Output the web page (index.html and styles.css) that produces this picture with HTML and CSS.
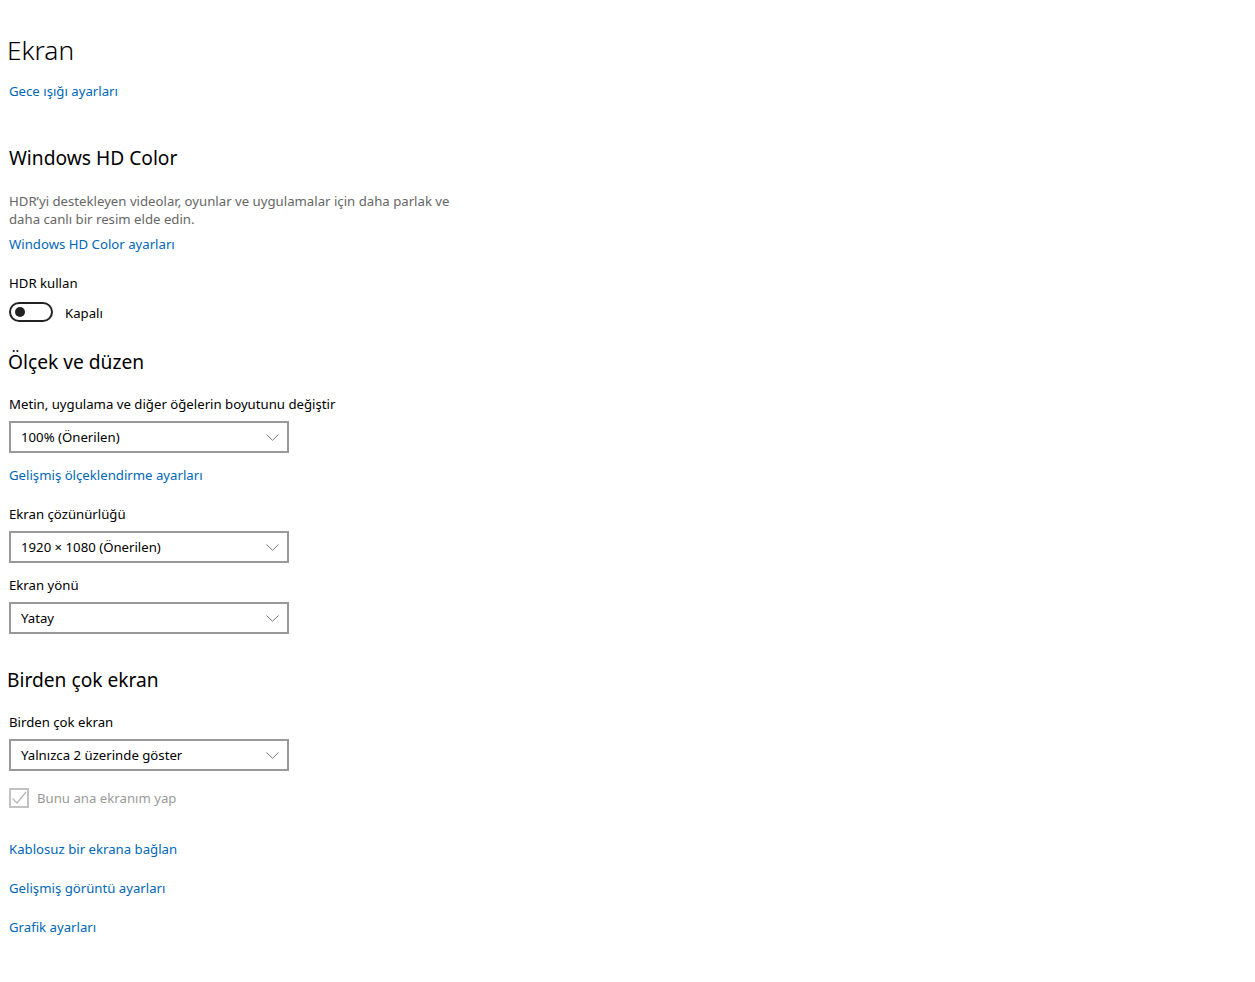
FILE: index.html
```html
<!DOCTYPE html>
<html lang="tr">
  <head>
    <meta charset="UTF-8" />
    <title>Ekran</title>
    <link rel="stylesheet" href="styles.css">
  </head>
  <body>
    <div class="page">
      <h1 class="page-title">Ekran</h1>
      <a class="link link-night" href="#">Gece ışığı ayarları</a>

      <h2 class="section-title hd-title">Windows HD Color</h2>
      <p class="desc">HDR’yi destekleyen videolar, oyunlar ve uygulamalar için daha parlak ve<br>daha canlı bir resim elde edin.</p>
      <a class="link hd-link" href="#">Windows HD Color ayarları</a>

      <div class="label hdr-label">HDR kullan</div>
      <div class="toggle-row">
        <span class="toggle"><span class="knob"></span></span>
        <span class="toggle-text">Kapalı</span>
      </div>

      <h2 class="section-title scale-title">Ölçek ve düzen</h2>
      <div class="label gap-18">Metin, uygulama ve diğer öğelerin boyutunu değiştir</div>
      <div class="select">
        <span>100% (Önerilen)</span>
        <svg class="chevron" width="13" height="7" viewBox="0 0 13 7"><path d="M0.5 0.5 L6.5 6.3 L12.5 0.5" fill="none" stroke="#7a7a7a" stroke-width="1"/></svg>
      </div>
      <a class="link gap-12" href="#">Gelişmiş ölçeklendirme ayarları</a>

      <div class="label gap-19">Ekran çözünürlüğü</div>
      <div class="select">
        <span>1920 × 1080 (Önerilen)</span>
        <svg class="chevron" width="13" height="7" viewBox="0 0 13 7"><path d="M0.5 0.5 L6.5 6.3 L12.5 0.5" fill="none" stroke="#7a7a7a" stroke-width="1"/></svg>
      </div>

      <div class="label gap-12">Ekran yönü</div>
      <div class="select">
        <span>Yatay</span>
        <svg class="chevron" width="13" height="7" viewBox="0 0 13 7"><path d="M0.5 0.5 L6.5 6.3 L12.5 0.5" fill="none" stroke="#7a7a7a" stroke-width="1"/></svg>
      </div>

      <h2 class="section-title multi-title">Birden çok ekran</h2>
      <div class="label gap-18">Birden çok ekran</div>
      <div class="select">
        <span>Yalnızca 2 üzerinde göster</span>
        <svg class="chevron" width="13" height="7" viewBox="0 0 13 7"><path d="M0.5 0.5 L6.5 6.3 L12.5 0.5" fill="none" stroke="#7a7a7a" stroke-width="1"/></svg>
      </div>

      <div class="check-row">
        <span class="checkbox">
          <svg width="20" height="20" viewBox="0 0 20 20"><path d="M3.5 10.5 L8 15 L17 4" fill="none" stroke="#b5b5b5" stroke-width="1.2"/></svg>
        </span>
        <span class="check-text">Bunu ana ekranım yap</span>
      </div>

      <a class="link gap-31" href="#">Kablosuz bir ekrana bağlan</a>
      <a class="link gap-19" href="#">Gelişmiş görüntü ayarları</a>
      <a class="link gap-19" href="#">Grafik ayarları</a>
    </div>
  </body>
</html>
```

FILE: styles.css
```css
body {
  margin: 0;
  background: #fff;
  font-family: "Noto Sans", "Open Sans", sans-serif;
  font-size: 13.2px;
  color: #000;
}
.page {
  padding: 30px 0 40px 9px;
  display: flex;
  flex-direction: column;
  align-items: flex-start;
}
.page-title {
  margin: 0 0 0 -2px;
  font-size: 26.3px;
  font-weight: 300;
  line-height: 40px;
}
.link {
  color: #0067b8;
  text-decoration: none;
  line-height: 20px;
}
.link-night {
  margin-top: 11px;
}
.section-title {
  margin: 0;
  font-size: 19.2px;
  font-weight: 400;
  line-height: 28px;
}
.hd-title {
  margin-top: 43px;
}
.scale-title {
  margin-top: 26px;
  margin-left: -1px;
}
.multi-title {
  margin-top: 32px;
  margin-left: -2px;
}
.desc {
  margin: 20px 0 0;
  color: #666;
  line-height: 18px;
}
.hd-link {
  margin-top: 6px;
}
.label {
  line-height: 20px;
}
.hdr-label {
  margin-top: 19px;
}
.toggle-row {
  margin-top: 9px;
  display: flex;
  align-items: center;
  height: 20px;
}
.toggle {
  width: 44px;
  height: 20px;
  box-sizing: border-box;
  border: 2px solid #222;
  border-radius: 10px;
  display: flex;
  align-items: center;
  padding-left: 4px;
}
.knob {
  width: 10px;
  height: 10px;
  border-radius: 50%;
  background: #222;
}
.toggle-text {
  margin-left: 12px;
  line-height: 20px;
  padding-top: 2px;
}
.select {
  margin-top: 7px;
  width: 280px;
  height: 32px;
  box-sizing: border-box;
  border: 2px solid #999;
  display: flex;
  align-items: center;
  justify-content: space-between;
  padding: 0 8px 0 10px;
}
.chevron {
  display: block;
}
.gap-12 { margin-top: 12px; }
.gap-18 { margin-top: 18px; }
.gap-19 { margin-top: 19px; }
.gap-31 { margin-top: 31px; }
.check-row {
  margin-top: 17px;
  display: flex;
  align-items: center;
  height: 20px;
}
.checkbox {
  width: 20px;
  height: 20px;
  box-sizing: border-box;
  border: 2px solid #c2c2c2;
  position: relative;
}
.checkbox svg {
  position: absolute;
  left: -2px;
  top: -2px;
}
.check-text {
  margin-left: 8px;
  color: #9a9a9a;
  line-height: 20px;
}
```
